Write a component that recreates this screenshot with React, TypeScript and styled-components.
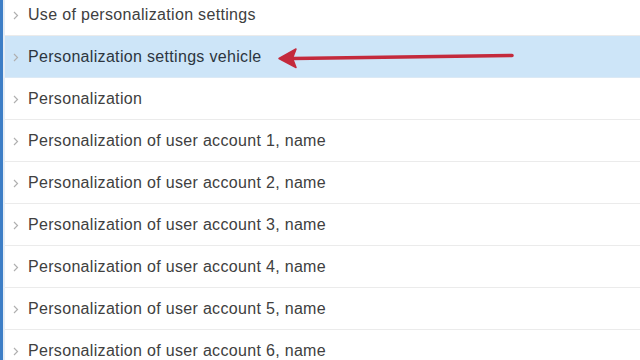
import React from "react";
import styled, { createGlobalStyle } from "styled-components";

const Global = createGlobalStyle`
  html, body { margin: 0; padding: 0; background: #ffffff; overflow: hidden; }
  body { width: 640px; height: 360px; }
`;

const Page = styled.div`
  display: flex;
  width: 640px;
  height: 360px;
  overflow: hidden;
  background: #ffffff;
`;

const Strip = styled.div`
  width: 3px;
  flex: none;
  background: #3d7ec6;
  border-right: 2px solid #e6edf4;
`;

const List = styled.div`
  flex: 1;
  display: flex;
  flex-direction: column;
  margin-top: -6px;
`;

const Row = styled.div<{ $active?: boolean }>`
  position: relative;
  flex: none;
  height: 41px;
  display: flex;
  align-items: center;
  padding-left: 8px;
  padding-top: 1px;
  box-sizing: border-box;
  height: 42px;
  border-bottom: 1px solid ${(p) => (p.$active ? "#dbe9f5" : "#ebebeb")};
  background: ${(p) => (p.$active ? "#cde5f8" : "#ffffff")};
`;

const Chevron = styled.span`
  width: 15px;
  flex: none;
  display: flex;
  align-items: center;
  color: #b0b0b0;
`;

const Label = styled.span<{ $active?: boolean }>`
  font-family: "Liberation Sans", Arial, sans-serif;
  font-size: 16px;
  color: ${(p) => (p.$active ? "#2c3540" : "#404040")};
  white-space: nowrap;
  letter-spacing: 0.32px;
`;

const Arrow = styled.svg`
  position: absolute;
  left: 266px;
  top: 11px;
`;

const items = [
  "Use of personalization settings",
  "Personalization settings vehicle",
  "Personalization",
  "Personalization of user account 1, name",
  "Personalization of user account 2, name",
  "Personalization of user account 3, name",
  "Personalization of user account 4, name",
  "Personalization of user account 5, name",
  "Personalization of user account 6, name",
];

export default function App() {
  return (
    <>
      <Global />
      <Page>
        <Strip />
        <List>
          {items.map((t, i) => {
            const active = i === 1;
            return (
              <Row key={i} $active={active}>
                <Chevron>
                  <svg width="6" height="9" viewBox="0 0 6 9">
                    <path d="M1 1 L4.5 4.5 L1 8" fill="none" stroke="currentColor" strokeWidth="1.2" />
                  </svg>
                </Chevron>
                <Label $active={active}>{t}</Label>
                {active && (
                  <Arrow width="252" height="22" viewBox="0 0 252 22">
                    <path d="M22 11.5 L241 8.5" stroke="#c42a3c" strokeWidth="3.6" strokeLinecap="round" />
                    <path d="M8 11.5 L25 2 L21.5 11.3 L25 20.5 Z" fill="#c42a3c" stroke="#c42a3c" strokeWidth="1.5" strokeLinejoin="round" />
                  </Arrow>
                )}
              </Row>
            );
          })}
        </List>
      </Page>
    </>
  );
}
